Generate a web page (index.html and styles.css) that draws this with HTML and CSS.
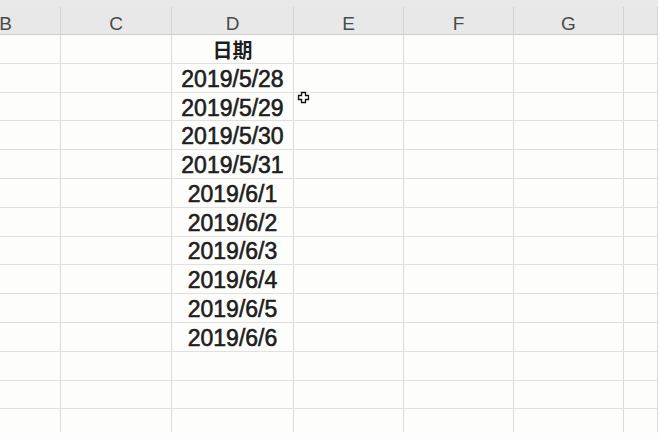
FILE: index.html
```html
<!DOCTYPE html>
<html lang="zh">
<head>
<meta charset="utf-8">
<title>Sheet</title>
<link rel="stylesheet" href="styles.css">
</head>
<body>
<div class="viewport">
  <div class="topstrip"></div>
  <div class="sheet">
    <div class="hd">B</div><div class="hd">C</div><div class="hd">D</div><div class="hd">E</div><div class="hd">F</div><div class="hd">G</div><div class="hd"></div>

    <div class="c"></div><div class="c"></div><div class="c title">日期</div><div class="c"></div><div class="c"></div><div class="c"></div><div class="c"></div>
    <div class="c"></div><div class="c"></div><div class="c val">2019/5/28</div><div class="c"></div><div class="c"></div><div class="c"></div><div class="c"></div>
    <div class="c"></div><div class="c"></div><div class="c val">2019/5/29</div><div class="c"></div><div class="c"></div><div class="c"></div><div class="c"></div>
    <div class="c"></div><div class="c"></div><div class="c val">2019/5/30</div><div class="c"></div><div class="c"></div><div class="c"></div><div class="c"></div>
    <div class="c"></div><div class="c"></div><div class="c val">2019/5/31</div><div class="c"></div><div class="c"></div><div class="c"></div><div class="c"></div>
    <div class="c"></div><div class="c"></div><div class="c val">2019/6/1</div><div class="c"></div><div class="c"></div><div class="c"></div><div class="c"></div>
    <div class="c"></div><div class="c"></div><div class="c val">2019/6/2</div><div class="c"></div><div class="c"></div><div class="c"></div><div class="c"></div>
    <div class="c"></div><div class="c"></div><div class="c val">2019/6/3</div><div class="c"></div><div class="c"></div><div class="c"></div><div class="c"></div>
    <div class="c"></div><div class="c"></div><div class="c val">2019/6/4</div><div class="c"></div><div class="c"></div><div class="c"></div><div class="c"></div>
    <div class="c"></div><div class="c"></div><div class="c val">2019/6/5</div><div class="c"></div><div class="c"></div><div class="c"></div><div class="c"></div>
    <div class="c"></div><div class="c"></div><div class="c val">2019/6/6</div><div class="c"></div><div class="c"></div><div class="c"></div><div class="c"></div>
    <div class="c"></div><div class="c"></div><div class="c"></div><div class="c"></div><div class="c"></div><div class="c"></div><div class="c"></div>
    <div class="c"></div><div class="c"></div><div class="c"></div><div class="c"></div><div class="c"></div><div class="c"></div><div class="c"></div>
    <div class="c last"></div><div class="c last"></div><div class="c last"></div><div class="c last"></div><div class="c last"></div><div class="c last"></div><div class="c last"></div>
  </div>
  <svg class="cursor" width="13" height="13" viewBox="0 0 13 13">
    <path d="M4.5 1.5 H8.5 V4.5 H11.5 V8.5 H8.5 V11.5 H4.5 V8.5 H1.5 V4.5 H4.5 Z" fill="#fff" stroke="#111" stroke-width="1.3"/>
  </svg>
</div>
</body>
</html>
```
FILE: styles.css
```css
html, body {
  margin: 0;
  padding: 0;
  background: #fdfdfb;
  overflow: hidden;
}
.viewport {
  position: relative;
  width: 660px;
  height: 439px;
  overflow: hidden;
}
.topstrip {
  height: 7px;
  background: #e9e9e9;
  width: 658px;
}
.sheet {
  display: grid;
  grid-template-columns: 110px 111px 122px 110px 110px 110px 34px;
  grid-template-rows: 28px repeat(13, 28.8px) 23px;
  margin-left: -49px;
  width: 707px;
  font-family: "Liberation Sans", Arial, sans-serif;
}
.hd {
  background: #e8e8e8;
  border-right: 1px solid #d3d3d3;
  border-bottom: 1px solid #cfcfcf;
  color: #4a4a4a;
  font-size: 19px;
  display: flex;
  align-items: center;
  justify-content: center;
  padding-top: 7px;
  box-sizing: border-box;
}
.c {
  border-right: 1px solid #dadada;
  border-bottom: 1px solid #e0e0e0;
  box-sizing: border-box;
  display: flex;
  align-items: center;
  justify-content: center;
  color: #1e1e1e;
}
.c.last {
  border-bottom: none;
}
.val {
  font-size: 23px;
  font-weight: normal;
  -webkit-text-stroke: 0.6px #1e1e1e;
  padding-top: 3px;
}
.title {
  font-family: "Noto Sans CJK SC", "Noto Sans CJK JP", sans-serif;
  font-size: 20px;
  font-weight: bold;
  padding-top: 2px;
}
.cursor {
  position: absolute;
  left: 297px;
  top: 91px;
}
```
